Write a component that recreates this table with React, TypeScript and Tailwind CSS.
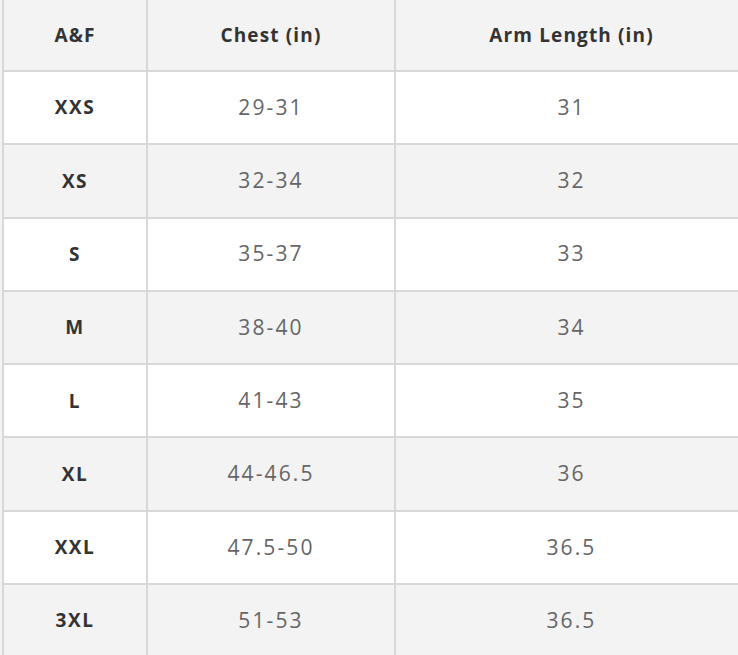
const rows = [
  { size: "XXS", chest: "29-31", arm: "31" },
  { size: "XS", chest: "32-34", arm: "32" },
  { size: "S", chest: "35-37", arm: "33" },
  { size: "M", chest: "38-40", arm: "34" },
  { size: "L", chest: "41-43", arm: "35" },
  { size: "XL", chest: "44-46.5", arm: "36" },
  { size: "XXL", chest: "47.5-50", arm: "36.5" },
  { size: "3XL", chest: "51-53", arm: "36.5" },
];

export default function App() {
  return (
    <div
      className="h-[655px] w-[738px] overflow-hidden bg-[#f3f3f3] pl-[2px]"
      style={{ fontFamily: '"Open Sans", "Liberation Sans", sans-serif' }}
    >
      <div className="w-[745px] border-l-2 border-[#d8d8d8]">
        {/* Header */}
        <div className="flex h-[72px] border-b-2 border-[#d8d8d8] bg-[#f3f3f3] text-[19px] font-bold tracking-[0.06em] text-[#333]">
          <div className="flex w-[144px] items-center justify-center border-r-2 border-[#d8d8d8]">A&amp;F</div>
          <div className="flex w-[248px] items-center justify-center border-r-2 border-[#d8d8d8]">Chest (in)</div>
          <div className="flex flex-1 items-center justify-center">Arm Length (in)</div>
        </div>

        {rows.map((r, i) => (
          <div
            key={r.size}
            className={`flex h-[73.3px] border-b-2 border-[#d8d8d8] ${i % 2 === 0 ? "bg-white" : "bg-[#f3f3f3]"}`}
          >
            <div className="flex w-[144px] items-center justify-center border-r-2 border-[#d8d8d8] text-[19px] font-bold tracking-[0.08em] text-[#333]">
              {r.size}
            </div>
            <div className="flex w-[248px] items-center justify-center border-r-2 border-[#d8d8d8] text-[21px] tracking-[0.1em] text-[#666]">
              {r.chest}
            </div>
            <div className="flex flex-1 items-center justify-center text-[21px] tracking-[0.1em] text-[#666]">
              {r.arm}
            </div>
          </div>
        ))}
      </div>
    </div>
  );
}
